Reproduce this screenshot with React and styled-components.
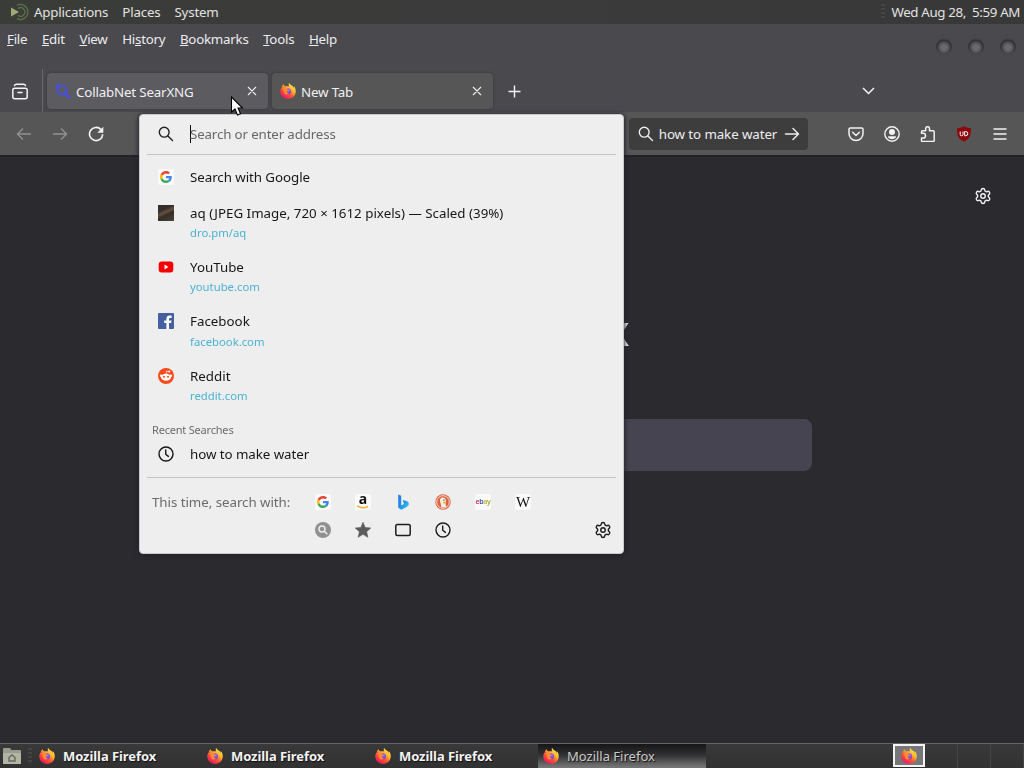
import React from 'react'
import styled, { createGlobalStyle, css } from 'styled-components';
import { Settings } from 'lucide-react';

const GlobalStyle = createGlobalStyle`
body {
margin: 0;
background-color: #2b2a2e;
font-family: 'Noto Sans', sans-serif;
font-size: 13.33px;
line-height: 18px;
overflow: hidden;
}
* {
box-sizing: border-box;
}
svg {
display: block;
flex: none;
}
`

const Desktop = styled.div`
width: 1024px;
height: 768px;
display: flex;
flex-direction: column;
position: relative;
white-space: nowrap;
`

const Panel = styled.div`
height: 24px;
background: linear-gradient(90deg, #3a3c38, #3b3b3b 50%, #383838);
color: #e2e2e0;
display: flex;
align-items: center;
padding: 0 4px 0 10px;
letter-spacing: -.19px;
`

const PanelMenu = styled.div`
display: flex;
gap: 14px;
margin-left: 5px;
flex: 1;
`

const PanelClock = styled.span`
letter-spacing: -.37px;
`

const Grip = styled.div`
width: 4px;
height: 16px;
margin-left: ${props => props.$left || 0}px;
margin-right: ${props => props.$gap || 0}px;
background: repeating-linear-gradient(#4c4c4c 0 2px, #363636 2px 4px);
opacity: .7;
`

const TitleArea = styled.div`
height: 89px;
background-color: #4a494e;
display: flex;
flex-direction: column;
border-bottom: 1px solid #555456;
`

const MenuBar = styled.div`
height: 30px;
display: flex;
align-items: center;
color: #ececee;
padding-left: 7px;
gap: 14.6px;
letter-spacing: -.25px;
`

const WindowButtons = styled.div`
display: flex;
gap: 16px;
margin-left: auto;
padding: 13px 8px 0 0;
`

const WindowButton = styled.div`
width: 16px;
height: 16px;
border-radius: 50%;
background: radial-gradient(circle at 50% 60%, #6a6a6d 0 20%, #505053 42%, #303033 58%, #444348 70%);
`

const TabStrip = styled.div`
height: 58px;
display: flex;
padding-top: 15px;
`

const ViewButton = styled.div`
width: 43px;
height: 43px;
display: flex;
align-items: center;
padding: 1px 0 0 12px;
border-right: 1px solid #69686c;
`

const Tab = styled.div`
width: 221px;
height: 36px;
margin: 4px 0 0 4px;
border-radius: 4px;
background-color: ${props => props.$active ? '#5c5b60' : '#565656'};
box-shadow: 0 0 3px rgba(0, 0, 0, .3);
color: #f0f0f2;
display: flex;
align-items: center;
padding: 0 11px 0 8px;
letter-spacing: -.17px;
& > span {
flex: 1;
margin-left: 5px;
padding-top: 2px;
}
`

const StripIcon = styled.div`
display: flex;
align-items: center;
height: 37px;
margin: ${props => props.$top || 4}px 0 0 ${props => props.$left}px;
`

const NavBar = styled.div`
height: 42px;
background-color: #565656;
display: flex;
align-items: center;
padding-left: 16px;
color: #f2f2f2;
`

const NavButtons = styled.div`
display: flex;
gap: 20px;
flex: 1;
`

const SearchBar = styled.div`
width: 179px;
height: 32px;
border-radius: 4px;
background-color: #3e3d3e;
color: #ededee;
display: flex;
align-items: center;
justify-content: space-between;
padding: 0 8px 0 9px;
letter-spacing: -.1px;
& > span {
margin-left: -2px;
}
`

const ToolButtons = styled.div`
display: flex;
gap: 20px;
margin: 0 16px 0 40px;
`

const Content = styled.div`
flex: 1;
background-color: #2b2a2e;
border-top: 2px solid #222126;
display: flex;
flex-direction: column;
align-items: flex-start;
`

const PageSettings = styled.div`
align-self: flex-end;
color: #f0f0f2;
margin: 30px 32px 0 0;
`

const Wordmark = styled.div`
width: 629px;
text-align: right;
color: #fbfbfe;
font-size: 41px;
line-height: 50px;
font-weight: 700;
margin-top: 100px;
will-change: transform;
`

const PageSearch = styled.div`
width: 600px;
height: 52px;
margin: 64px 0 0 212px;
border-radius: 8px;
background-color: #464450;
`

const Popup = styled.div`
position: absolute;
left: 139px;
top: 114px;
width: 485px;
height: 440px;
border-radius: 4px;
border: 1px solid #c9c9d0;
background-color: #eeeeee;
box-shadow: 0 1px 4px 1px #24222b;
color: #17171a;
padding: 0 7px;
font-size: 13.33px;
`

const UrlInput = styled.div`
height: 40px;
display: flex;
align-items: center;
border-bottom: 1px solid #c4c4c6;
padding: 0 0 2px 11px;
color: #68686c;
margin-bottom: 4px;
letter-spacing: -.15px;
& > span {
margin-left: -1px;
}
`

const Caret = styled.div`
width: 1px;
height: 18px;
margin-left: 16px;
background-color: #111;
`

const Result = styled.div`
height: ${props => props.$tall ? '54.4px' : '36px'};
display: flex;
align-items: ${props => props.$tall ? 'flex-start' : 'center'};
gap: 16px;
padding: ${props => props.$tall ? '8.7px 0 0 11px' : '0 0 0 11px'};
letter-spacing: ${props => props.$tall ? 0 : '-.06px'};
& > svg {
margin-top: ${props => props.$tall ? 1 : 0}px;
}
`

const ResultUrl = styled.div`
font-size: 11.3px;
color: #4ab2d2;
margin-top: 2.4px;
line-height: 18px;
`

const GroupLabel = styled.div`
height: 23.6px;
padding: 8.6px 0 0 5px;
font-size: 11px;
line-height: 18px;
color: #6b6b6e;
letter-spacing: -.2px;
`

const OneOffs = styled.div`
border-top: 1px solid #c4c4c6;
margin-top: 5px;
padding: 14px 6px 0 5px;
display: grid;
grid-template-columns: 163px 1fr 16px;
color: #6b6b6e;
row-gap: 8px;
& > span {
padding-top: 1px;
letter-spacing: -.05px;
}
`

const EngineRow = styled.div`
display: flex;
align-items: center;
gap: 24px;
height: 20px;
color: #1d1d20;
`

const Favicon = styled.div`
width: 16px;
height: 16px;
border-radius: 2px;
display: flex;
align-items: center;
justify-content: center;
background-color: #fafafa;
color: #111;
${props => props.$serif && css`
font-family: 'Liberation Serif', serif;
font-size: 15px;
`}
${props => props.$tiny && css`
font-size: 7px;
letter-spacing: -.4px;
font-weight: 600;
`}
`

const EbayLetter = styled.span`
color: ${props => props.$color};
`

const Thumb = styled.div`
width: 16px;
height: 16px;
margin-top: 1px;
background: linear-gradient(155deg, #342d29 30%, #68503a 45%, #332d29 60%, #514234);
`

const Amazon = styled.div`
font-weight: 700;
font-size: 14px;
line-height: 16px;
display: flex;
flex-direction: column;
align-items: center;
margin-top: -5px;
& > svg {
margin-top: -2px;
}
`

const GlassIcon = styled.div`
color: #222;
`

const Taskbar = styled.div`
height: 25px;
border-top: 1px solid #66666a;
background: linear-gradient(#39393a, #313132);
display: flex;
align-items: center;
padding-left: 2px;
`

const Task = styled.div`
width: 168px;
height: 24px;
display: flex;
align-items: center;
gap: 8px;
padding-left: 5px;
font-weight: ${props => props.$active ? 400 : 700};
font-size: 13px;
letter-spacing: ${props => props.$active ? 0 : '-.07px'};
color: ${props => props.$active ? '#c9c9c9' : '#f3f3f3'};
text-shadow: 1px 1px 1px #111;
background: ${props => props.$active ? 'linear-gradient(#161617, #303032 45%, #747475 95%)' : 'none'};
`

const Workspaces = styled.div`
margin-left: auto;
display: flex;
`

const Workspace = styled.div`
width: 33px;
height: 24px;
display: flex;
align-items: center;
justify-content: center;
border-right: 1px solid #454547;
${props => props.$current && css`
width: 32px;
height: 23px;
border: 2px solid #f4f4f4;
background-color: #77777a;
`}
`

const Pointer = styled.svg`
position: absolute;
left: 230px;
top: 96px;
`

const Icon = ({ size = 16, width = 1.4, children }) => (
    <svg width={size} height={size} viewBox="0 0 16 16" fill="none" stroke="currentColor" strokeWidth={width} strokeLinecap="round" strokeLinejoin="round">
        {children}
    </svg>
)

const Magnifier = ({ width }) => (
    <Icon width={width}>
        <circle cx="6.2" cy="6.2" r="4.9" />
        <path d="M9.9 9.9l4.6 4.6" />
    </Icon>
)

const Close = () => (
    <Icon size={10} width={1.7}><path d="M2 2l12 12M14 2l-12 12" /></Icon>
)

const Clock = () => (
    <Icon width={1.4}><circle cx="8" cy="8" r="7" /><path d="M7.7 4v4.2l2.7 2.2" /></Icon>
)

const Gear = () => <Settings size={18} strokeWidth={1.9} />

const Firefox = ({ size = 16, id }) => (
    <svg width={size} height={size} viewBox="0 0 32 32">
        <defs>
            <linearGradient id={`${id}a`} x1="0.85" y1="0.05" x2="0.2" y2="0.95">
                <stop offset="0" stopColor="#fff04c" />
                <stop offset=".35" stopColor="#ffb52d" />
                <stop offset=".6" stopColor="#ff5a35" />
                <stop offset="1" stopColor="#ee1265" />
            </linearGradient>
            <radialGradient id={`${id}b`} cx=".6" cy=".3" r=".8">
                <stop offset="0" stopColor="#a66cf2" />
                <stop offset="1" stopColor="#5b2fbd" />
            </radialGradient>
        </defs>
        <path fill={`url(#${id}a)`} d="M18.5 0c-1.8 2.2-1.3 4.6.2 6.6L10 6.3C8 5.5 7.400 4 7.600 2.500 5 4 4 6 3.700 8.500 1.500 11 .500 14 .600 17c.3 8.300 7 14.600 15.400 14.600S31.400 25 31.500 16.800c.1-4.400-1.500-8.200-4.200-10.700.5 1.500.6 2.600.5 3.700C26.500 5.500 20.500 4.500 18.500 0z" />
        <circle cx="16" cy="16.500" r="6.200" fill={`url(#${id}b)`} />
        <path fill="#ff8a32" d="M4.500 10.500c2.600-2 6-1.800 8.400-.2 1.300-.3 2.400-.2 3.400.2-1.800 1-2 2.100-2 2.800 1.700.7 3 .5 3.400 1.300-.4 1.400-2.500 1.600-3.700 2.600-.5 3 2.500 4.300 5.300 3-3 4-8.800 3.400-10.800-.4C7 17 8 14 4.500 10.500z" />
    </svg>
)

const Google = () => (
    <svg width="12" height="12" viewBox="0 0 48 48">
        <path fill="#ea4335" d="M24 9.500c3.540 0 6.710 1.220 9.210 3.600l6.850-6.850C35.900 2.380 30.470 0 24 0 14.620 0 6.510 5.380 2.560 13.220l7.980 6.190C12.430 13.720 17.740 9.500 24 9.500z" />
        <path fill="#4285f4" d="M46.980 24.550c0-1.570-.15-3.090-.38-4.550H24v9.020h12.940c-.58 2.960-2.260 5.480-4.780 7.180l7.730 6c4.510-4.180 7.090-10.360 7.090-17.650z" />
        <path fill="#fbbc05" d="M10.530 28.590a14.500 14.500 0 010-9.180l-7.980-6.190a24 24 0 000 21.560z" />
        <path fill="#34a853" d="M24 48c6.480 0 11.930-2.130 15.890-5.810l-7.730-6c-2.150 1.450-4.920 2.300-8.160 2.300-6.260 0-11.570-4.220-13.470-9.910l-7.980 6.190C6.510 42.620 14.620 48 24 48z" />
    </svg>
)

const YouTube = () => (
    <svg width="16" height="16" viewBox="0 0 16 16"><rect x=".7" y="2.600" width="14.600" height="10.800" rx="3" fill="#f50000" /><path d="M6.500 5.600v4.800l4-2.400z" fill="#fff" /></svg>
)

const Facebook = () => (
    <svg width="16" height="16" viewBox="0 0 16 16"><rect width="16" height="16" rx="1" fill="#4460a0" /><path d="M11 16v-6h2.200l.3-2.400H11V6.100c0-.8.300-1.200 1.200-1.200h1.400V2.600l-1.900-.1c-2.100 0-3.300 1.200-3.300 3.400v1.700H6.200V10h2.200v6z" fill="#fff" /></svg>
)

const Reddit = () => (
    <svg width="16" height="16" viewBox="0 0 16 16">
        <circle cx="8" cy="8" r="8" fill="#ff4a1c" />
        <ellipse cx="8" cy="9.300" rx="5" ry="3.500" fill="#fff" />
        <circle cx="3.200" cy="7.800" r="1.300" fill="#fff" /><circle cx="12.800" cy="7.800" r="1.300" fill="#fff" />
        <circle cx="11.200" cy="3.500" r="1" fill="#fff" />
        <path d="M8 6l.7-2.900 2.200.5" stroke="#fff" strokeWidth=".7" fill="none" />
        <circle cx="6" cy="8.800" r="1" fill="#ff4a1c" /><circle cx="10" cy="8.800" r="1" fill="#ff4a1c" />
    </svg>
)

const Bing = () => (
    <svg width="16" height="16" viewBox="0 0 16 16">
        <defs><linearGradient id="bing" x1="0" y1="0" x2="1" y2="1"><stop stopColor="#2777e8" /><stop offset=".5" stopColor="#1a90e8" /><stop offset="1" stopColor="#45d1ed" /></linearGradient></defs>
        <path d="M3.200 .5l3 1.200v9.800l2.800-1.600L7.800 6 12 7.300c1.300.5 1.800 1.500 1.800 2.600 0 1.300-.7 2.100-1.800 2.800L6.500 15.800l-3.300-2z" fill="url(#bing)" />
    </svg>
)

const Duck = () => (
    <svg width="16" height="16" viewBox="0 0 16 16">
        <circle cx="8" cy="8" r="7.700" fill="#d9613d" />
        <circle cx="8" cy="8" r="6.300" fill="none" stroke="#fff" strokeWidth=".8" />
        <path d="M6.500 13.500L5 6.800C4.700 4.500 6 3.200 8 3.400c2 .1 3 1.500 3 3.600l-.5 2.500.8 3.800z" fill="#f7eee6" />
        <path d="M8.200 7.600l3.300.3-1.200 1.500H8z" fill="#f5b52b" /><circle cx="9" cy="6" r=".7" fill="#345" />
    </svg>
)

const engines = [
    <Favicon key="g"><Google /></Favicon>,
    <Favicon key="a"><Amazon>a<svg width="14" height="4" viewBox="0 0 14 4"><path d="M1 .8q6 3.500 11 .5" fill="none" stroke="#f4ae32" strokeWidth="1.500" /></svg></Amazon></Favicon>,
    <Bing key="b" />,
    <Duck key="d" />,
    <Favicon key="e" $tiny><EbayLetter $color="#d33342">e</EbayLetter><EbayLetter $color="#3557b5">b</EbayLetter><EbayLetter $color="#dba52d">a</EbayLetter><EbayLetter $color="#86b832">y</EbayLetter></Favicon>,
    <Favicon key="w" $serif>W</Favicon>,
]

const sites = [
    { icon: <Thumb />, title: 'aq (JPEG Image, 720 × 1612 pixels) — Scaled (39%)', url: 'dro.pm/aq' },
    { icon: <YouTube />, title: 'YouTube', url: 'youtube.com' },
    { icon: <Facebook />, title: 'Facebook', url: 'facebook.com' },
    { icon: <Reddit />, title: 'Reddit', url: 'reddit.com' },
]

// the number is the index of the underlined mnemonic
const menus = [['File', 0], ['Edit', 0], ['View', 0], ['History', 2], ['Bookmarks', 0], ['Tools', 0], ['Help', 0]]

const UrlPopup = () => (
    <Popup>
        <UrlInput>
            <GlassIcon><Magnifier /></GlassIcon>
            <Caret />
            <span>Search or enter address</span>
        </UrlInput>
        <Result>
            <Favicon><Google /></Favicon>
            <span>Search with Google</span>
        </Result>
        {sites.map(site => (
            <Result key={site.url} $tall>
                {site.icon}
                <div>
                    <div>{site.title}</div>
                    <ResultUrl>{site.url}</ResultUrl>
                </div>
            </Result>
        ))}
        <GroupLabel>Recent Searches</GroupLabel>
        <Result>
            <Clock />
            <span>how to make water</span>
        </Result>
        <OneOffs>
            <span>This time, search with:</span>
            <EngineRow>{engines}</EngineRow>
            <span />
            <span />
            <EngineRow>
                <svg width="16" height="16" viewBox="0 0 16 16"><circle cx="8" cy="8" r="8" fill="#919191" /><circle cx="7" cy="7" r="3" fill="none" stroke="#eee" strokeWidth="1.400" /><path d="M9.300 9.300l3 3" stroke="#eee" strokeWidth="1.500" /></svg>
                <svg width="16" height="16" viewBox="0 0 16 16"><path d="M8 .3l2.200 5.200 5.600.5-4.200 3.700 1.300 5.600L8 12.300l-4.900 3 1.300-5.600L.2 6l5.600-.5z" fill="#5c5c5e" stroke="#5c5c5e" strokeWidth=".6" strokeLinejoin="round" /></svg>
                <Icon width={1.5}><rect x=".8" y="2.500" width="14.400" height="11" rx="1.500" /></Icon>
                <Clock />
            </EngineRow>
            <EngineRow><Gear /></EngineRow>
        </OneOffs>
    </Popup>
)

const App = () => (
    <Desktop>
        <GlobalStyle />
        <Panel>
            <svg width="19" height="18" viewBox="0 0 19 18">
                <path d="M7 2.300A7.500 7.500 0 117 15.700M8 5.500a4.300 4.300 0 110 7" fill="none" stroke="#5d7148" strokeWidth="1.300" />
                <path d="M1 4.500v9l8-4.500z" fill="#a0a878" />
            </svg>
            <PanelMenu>
                <span>Applications</span>
                <span>Places</span>
                <span>System</span>
            </PanelMenu>
            <Grip $gap={6} />
            <PanelClock>Wed Aug 28,&nbsp; 5:59 AM</PanelClock>
        </Panel>
        <TitleArea>
            <MenuBar>
                {menus.map(([name, key]) => (
                    <span key={name}>{name.slice(0, key)}<u>{name[key]}</u>{name.slice(key + 1)}</span>
                ))}
                <WindowButtons>
                    <WindowButton />
                    <WindowButton />
                    <WindowButton />
                </WindowButtons>
            </MenuBar>
            <TabStrip>
                <ViewButton>
                    <svg width="16" height="17" viewBox="0 0 16 17" fill="none" stroke="#f4f4f6" strokeWidth="1.500" strokeLinecap="round">
                        <rect x=".8" y="5.300" width="14.400" height="10.400" rx="2" />
                        <path d="M2.500 2.500Q3 1.200 4.500 1.200h7q1.500 0 2 1.300M6 9.500h4" />
                    </svg>
                </ViewButton>
                <Tab $active>
                    <svg width="16" height="16" viewBox="0 0 16 16" fill="none" stroke="#4a50dc">
                        <circle cx="7" cy="7" r="4.500" strokeWidth="2.200" />
                        <path d="M10.500 10.500l4.500 4.500" strokeWidth="3" />
                        <path d="M1 5q1-3.500 4-4" strokeWidth="1.300" />
                    </svg>
                    <span>CollabNet SearXNG</span>
                    <Close />
                </Tab>
                <Tab>
                    <Firefox id="tab" />
                    <span>New Tab</span>
                    <Close />
                </Tab>
                <StripIcon $left={15}>
                    <svg width="13" height="13" viewBox="0 0 13 13" stroke="#f4f4f6" strokeWidth="1.400"><path d="M6.500 .5v12M.5 6.500h12" /></svg>
                </StripIcon>
                <StripIcon $left={341} $top={3}>
                    <svg width="13" height="8" viewBox="0 0 13 8" fill="none" stroke="#f4f4f6" strokeWidth="1.500"><path d="M1 1l5.500 5.500L12 1" /></svg>
                </StripIcon>
            </TabStrip>
        </TitleArea>
        <NavBar>
            <NavButtons>
                <svg width="16" height="16" viewBox="0 0 16 16" fill="none" stroke="#919192" strokeWidth="1.400"><path d="M15 8H1.500M7 2.500L1.500 8 7 13.500" /></svg>
                <svg width="16" height="16" viewBox="0 0 16 16" fill="none" stroke="#919192" strokeWidth="1.400"><path d="M1 8h13.500M9 2.500L14.500 8 9 13.500" /></svg>
                <svg width="16" height="16" viewBox="0 0 16 16" fill="none" stroke="#f4f4f4" strokeWidth="1.600"><path d="M14.700 8.300A6.600 6.600 0 1113 3.600" /><path d="M15.300 .8v6H9.300z" fill="#f4f4f4" stroke="none" /></svg>
            </NavButtons>
            <SearchBar>
                <Magnifier />
                <span>how to make water</span>
                <Icon width={1.500}><path d="M1.500 8h13M9 2.500L14.500 8 9 13.500" /></Icon>
            </SearchBar>
            <ToolButtons>
                <Icon width={1.500}><path d="M2.300 2h11.400q1.300 0 1.300 1.300V7.500a7 7 0 01-14 0V3.300Q1 2 2.300 2zM4.600 6.300L8 9.500l3.400-3.200" /></Icon>
                <Icon width={1.400}><circle cx="8" cy="8" r="7.200" /><circle cx="8" cy="6" r="2.300" fill="currentColor" /><path d="M3.800 11.300q0-1 1-1h6.400q1 0 1 1Q8 15 3.800 11.300z" fill="currentColor" stroke="none" /></Icon>
                <Icon width={1.500}><path d="M1.500 7.300V5.800q0-1 1-1h3.200V2.600a1.900 1.900 0 013.800 0v2.200h3.700q1 0 1 1v8.700q0 1-1 1H2.500q-1 0-1-1V12h1.700a2.300 2.300 0 000-4.700z" /></Icon>
                <svg width="16" height="16" viewBox="0 0 16 16">
                    <path d="M8 .3Q11 2.300 15 2.300C15 9 14.500 12.500 8 15.800 1.500 12.500 1 9 1 2.300 5 2.300 8 .3 8 .3z" fill="#8b080c" />
                    <path d="M4.200 5.500v3q0 1.300 1.300 1.300T7 8.500v-3M8.700 5.500v4.300h.8q2.300 0 2.300-2.100T9.500 5.500z" fill="none" stroke="#fff" strokeWidth="1" />
                </svg>
                <Icon width={1.500}><path d="M2 3h12M2 8h12M2 13h12" /></Icon>
            </ToolButtons>
        </NavBar>
        <Content>
            <PageSettings><Gear /></PageSettings>
            <Wordmark>Firefox</Wordmark>
            <PageSearch />
        </Content>
        <Taskbar>
            <svg width="20" height="18" viewBox="0 0 20 18">
                <path d="M1 2q0-1 1-1h6l1.500 2H18q1 0 1 1v12q0 1-1 1H2q-1 0-1-1z" fill="#9a9d8d" />
                <path d="M1 6h18v10q0 1-1 1H2q-1 0-1-1z" fill="#b3b5a4" />
                <path d="M7 14v-3.500L10 8l3 2.500V14z" fill="none" stroke="#66685c" strokeWidth="1.400" />
            </svg>
            <Grip $left={6} $gap={2} />
            {['one', 'two', 'three', 'four'].map(id => (
                <Task key={id} $active={id === 'four'}>
                    <Firefox id={id} />
                    <span>Mozilla Firefox</span>
                </Task>
            ))}
            <Workspaces>
                <Workspace $current><Firefox id="space" /></Workspace>
                <Workspace />
                <Workspace />
                <Workspace />
            </Workspaces>
        </Taskbar>
        <UrlPopup />
        <Pointer width="14" height="21" viewBox="0 0 14 21">
            <path d="M1.500 1v15l3.500-3 2.500 6 3-1.300L8 12h4.500z" fill="#fff" stroke="#000" strokeWidth="1.100" />
        </Pointer>
    </Desktop>
)

export default App
